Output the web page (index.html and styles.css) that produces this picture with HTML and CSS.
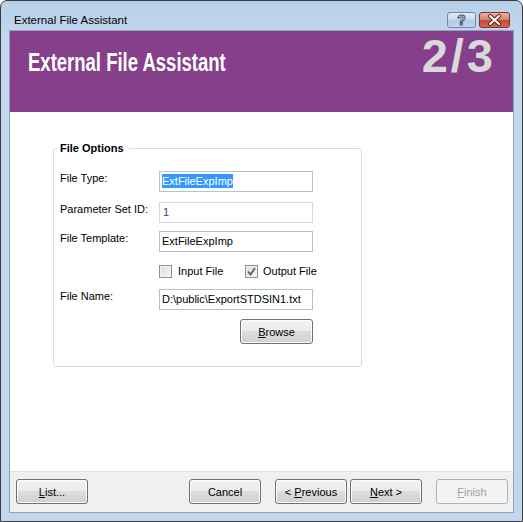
FILE: index.html
```html
<!DOCTYPE html>
<html lang="en">
<head>
    <meta charset="UTF-8">
    <meta name="viewport" content="width=device-width, initial-scale=1.0">
    <title>External File Assistant</title>
    <link rel="stylesheet" href="styles.css">
</head>
<body>
    <div class="window">
        <div class="titlebar">
            <span class="title">External File Assistant</span>
            <div class="caption-buttons">
                <span class="cap-btn help">
                    <svg width="29" height="16" viewBox="0 0 29 16">
                        <text x="14.5" y="13" text-anchor="middle" class="help-mark">?</text>
                    </svg>
                </span>
                <span class="cap-btn close">
                    <svg width="31" height="16" viewBox="0 0 31 16">
                        <path d="M11 4 L20 12 M20 4 L11 12" stroke="#5a2418" stroke-width="4" stroke-linecap="round"/>
                        <path d="M11 4 L20 12 M20 4 L11 12" stroke="#ffffff" stroke-width="2" stroke-linecap="round"/>
                    </svg>
                </span>
            </div>
        </div>

        <div class="client">
            <div class="banner">
                <h1>External File Assistant</h1>
                <div class="step">2/3</div>
            </div>

            <div class="page">
                <fieldset class="group">
                    <legend>File Options</legend>

                    <div class="row">
                        <label>File Type:</label>
                        <div class="textbox"><span class="selected">ExtFileExpImp</span></div>
                    </div>

                    <div class="row gap-10">
                        <label>Parameter Set ID:</label>
                        <div class="textbox readonly">1</div>
                    </div>

                    <div class="row gap-8">
                        <label>File Template:</label>
                        <div class="textbox">ExtFileExpImp</div>
                    </div>

                    <div class="row checks gap-13">
                        <span></span>
                        <div class="check-list">
                            <span class="check"><span class="box"></span>Input File</span>
                            <span class="check"><span class="box checked">
                                <svg width="9" height="9" viewBox="0 0 9 9"><path d="M1 4.5 L3.5 7.5 L8 1" fill="none" stroke="#4a5f80" stroke-width="1.8"/></svg>
                            </span>Output File</span>
                        </div>
                    </div>

                    <div class="row gap-11">
                        <label>File Name:</label>
                        <div class="textbox">D:\public\ExportSTDSIN1.txt</div>
                    </div>

                    <div class="row gap-9">
                        <span></span>
                        <button class="btn browse"><u>B</u>rowse</button>
                    </div>
                </fieldset>
            </div>

            <div class="footer">
                <button class="btn"><u>L</u>ist...</button>
                <span class="spacer"></span>
                <button class="btn">Cancel</button>
                <button class="btn prev">&lt; <u>P</u>revious</button>
                <button class="btn next"><u>N</u>ext &gt;</button>
                <button class="btn finish" disabled><u>F</u>inish</button>
            </div>
        </div>
    </div>
</body>
</html>
```

FILE: styles.css
```css
* {
    box-sizing: border-box;
}

body {
    margin: 0;
    background: #ffffff;
    font-family: "Liberation Sans", Arial, sans-serif;
    font-size: 11px;
    color: #000;
}

.window {
    width: 523px;
    height: 522px;
    border: 1px solid #3c3c3c;
    border-radius: 7px 7px 0 0;
    padding: 0 8px 8px 8px;
    background: linear-gradient(#b7cfe9, #c4d8ee 40px, #c2d7ee);
}

.titlebar {
    height: 29px;
    display: flex;
    align-items: flex-start;
    justify-content: space-between;
    padding: 11px 4px 0 5px;
}

.title {
    font-size: 11.5px;
    line-height: 14px;
    margin-top: 1px;
}

.caption-buttons {
    display: flex;
    gap: 3px;
}

.cap-btn {
    display: block;
    height: 16px;
    border-radius: 3px;
}

.cap-btn svg {
    display: block;
}

.help {
    width: 29px;
    border: 1px solid #6f88a8;
    background: linear-gradient(#e2ebf6, #c8d8ec 50%, #b3c8e2 50%, #c4d6ec);
}

.help svg {
    margin: -1px;
}

.help-mark {
    font-family: "Liberation Sans", Arial, sans-serif;
    font-size: 14px;
    font-weight: bold;
    fill: #ffffff;
    stroke: #3e4f66;
    stroke-width: 1;
}

.close {
    width: 31px;
    border: 1px solid #7d3325;
    background: linear-gradient(#eab1a2, #d5806e 50%, #c2462f 50%, #d46a50);
}

.close svg {
    margin: -1px;
}

.client {
    border: 1px solid #8ea3bd;
    background: #ffffff;
}

.banner {
    height: 81px;
    background: #863f8a;
    display: flex;
    justify-content: space-between;
    align-items: flex-start;
    padding: 0 17px 0 18px;
}

/* no narrow face installed, so squeeze the bold one */
.banner h1 {
    margin: 19px 0 0 0;
    font-size: 25px;
    line-height: 25px;
    font-weight: bold;
    color: #ffffff;
    white-space: nowrap;
    transform: scaleX(0.74);
    transform-origin: left top;
}

.step {
    margin-top: 1px;
    font-size: 47px;
    line-height: 47px;
    font-weight: bold;
    letter-spacing: 3px;
    color: #d9d9d9;
}

.page {
    height: 359px;
    padding: 30px 0 0 43px;
}

.group {
    width: 309px;
    margin: 0;
    padding: 16px 0 22px 6px;
    border: 1px solid #dcdcdc;
    border-radius: 3px;
}

.group legend {
    font-weight: bold;
    line-height: 13px;
    padding: 0 5px 0 3px;
    margin-left: -3px;
}

.row {
    display: grid;
    grid-template-columns: 99px 154px;
    align-items: start;
}

.row label {
    line-height: 13px;
    padding-top: 1px;
}

.gap-8 { margin-top: 8px; }
.gap-9 { margin-top: 9px; }
.gap-10 { margin-top: 10px; }
.gap-11 { margin-top: 11px; }
.gap-13 { margin-top: 13px; }

.textbox {
    height: 21px;
    border: 1px solid #b2c2d5;
    line-height: 19px;
    padding-left: 2px;
    white-space: nowrap;
    background: #ffffff;
}

.textbox.readonly {
    border-color: #d3dbe5;
    color: #27466c;
    padding-left: 3px;
}

.selected {
    display: inline-block;
    line-height: 14px;
    background: #3399ff;
    color: #ffffff;
}

.check-list {
    display: flex;
    line-height: 13px;
}

.check {
    display: flex;
    align-items: center;
    flex: 0 0 86px;
    white-space: nowrap;
}

.check .box {
    width: 13px;
    height: 13px;
    margin-right: 6px;
    border: 1px solid #8e8f8f;
    background: linear-gradient(135deg, #dcdcdc, #f6f6f6);
    box-shadow: inset 0 0 0 1px #f4f4f4;
    display: flex;
    align-items: center;
    justify-content: center;
}

.check .box.checked {
    margin-right: 5px;
}

.btn {
    width: 72px;
    height: 25px;
    padding: 0;
    border: 1px solid #707070;
    border-radius: 3px;
    background: linear-gradient(#f2f2f2, #ebebeb 50%, #dddddd 50%, #cfcfcf);
    box-shadow: inset 0 0 0 1px #fbfbfb;
    font-family: "Liberation Sans", Arial, sans-serif;
    font-size: 11px;
    color: #000;
}

.btn.browse {
    width: 73px;
    justify-self: end;
}

.btn:disabled {
    border-color: #adb2b5;
    background: #f4f4f4;
    box-shadow: none;
    color: #a0a0a0;
}

.footer {
    height: 41px;
    border-top: 1px solid #dfdfdf;
    background: #f0f0f0;
    display: flex;
    align-items: flex-start;
    padding: 7px 5px 0 6px;
}

.spacer {
    flex: 1;
}

.btn.prev {
    margin-left: 14px;
}

.btn.next {
    margin-left: 3px;
}

.btn.finish {
    margin-left: 14px;
}
```
